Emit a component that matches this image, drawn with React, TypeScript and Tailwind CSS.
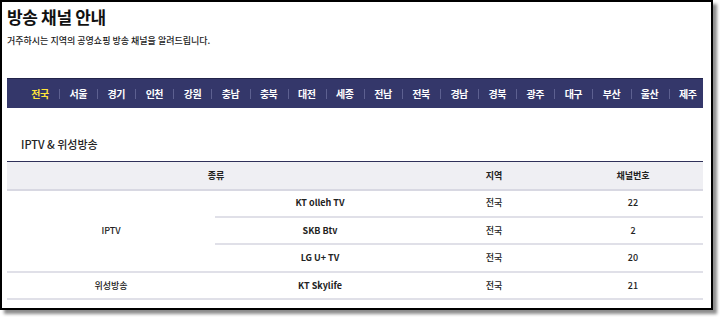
import React from 'react';

const regions = ['전국', '서울', '경기', '인천', '강원', '충남', '충북', '대전', '세종', '전남', '전북', '경남', '경북', '광주', '대구', '부산', '울산', '제주'];

const rows = [
    { name: 'KT olleh TV', area: '전국', ch: '22' },
    { name: 'SKB Btv', area: '전국', ch: '2' },
    { name: 'LG U+ TV', area: '전국', ch: '20' },
];

const cell = 'h-[27.4px] border-b-2 border-[#e0e0e8] text-center align-middle';

const App: React.FC = () => {
    return (
        <div className="w-[720px] h-[317px] bg-white" style={{ fontFamily: '"Noto Sans CJK KR", "Noto Sans", sans-serif' }}>
            <div className="w-[713px] h-[310px] border-2 border-black bg-white shadow-[4px_4px_3px_rgba(0,0,0,0.45)] text-[#1e1e1e]">
                <div className="ml-[5px] w-[696px] flex flex-col">
                    <h1 className="mt-[3px] text-[17px] leading-[24px] font-bold tracking-[-0.02em] text-[#111]">방송 채널 안내</h1>
                    <p className="mt-[5px] text-[9px] leading-[14px] font-medium text-[#1a1a1a]">거주하시는 지역의 공영쇼핑 방송 채널을 알려드립니다.</p>

                    <nav className="mt-[30px] h-[30px] flex items-center pl-[14px] bg-[#34376a] border-t border-[#22244a] overflow-hidden">
                        {regions.map((r, i) => (
                            <span
                                key={r}
                                className={`relative shrink-0 w-[38.1px] text-center text-[10px] font-bold tracking-[-0.05em] ${i === 0 ? 'text-[#ffe53a]' : 'text-white'} ${i > 0 ? "before:content-[''] before:absolute before:left-0 before:top-[3px] before:h-[10px] before:w-px before:bg-[#5d6090]" : ''}`}
                            >
                                {r}
                            </span>
                        ))}
                    </nav>

                    <h2 className="mt-[28px] pl-[14px] text-[11px] leading-[16px] font-medium text-[#222]">IPTV &amp; 위성방송</h2>

                    <table className="mt-[9px] w-[696px] table-fixed border-collapse text-[9px] text-[#222]">
                        <colgroup>
                            <col className="w-[208px]" />
                            <col className="w-[210px]" />
                            <col className="w-[138px]" />
                            <col className="w-[140px]" />
                        </colgroup>
                        <thead>
                            <tr className="bg-[#efeff3] border-t border-[#2f3159]">
                                <th colSpan={2} className="h-[28px] border-b-2 border-[#d8d8e2] font-bold">종류</th>
                                <th className="h-[28px] border-b-2 border-[#d8d8e2] font-bold">지역</th>
                                <th className="h-[28px] border-b-2 border-[#d8d8e2] font-bold">채널번호</th>
                            </tr>
                        </thead>
                        <tbody>
                            {rows.map((row, i) => (
                                <tr key={row.name}>
                                    {i === 0 && (
                                        <td rowSpan={3} className={`${cell} font-medium`}>IPTV</td>
                                    )}
                                    <td className={`${cell} font-bold`}>{row.name}</td>
                                    <td className={`${cell} font-medium`}>{row.area}</td>
                                    <td className={`${cell} font-medium`}>{row.ch}</td>
                                </tr>
                            ))}
                            <tr>
                                <td className={`${cell} font-medium`}>위성방송</td>
                                <td className={`${cell} font-bold`}>KT Skylife</td>
                                <td className={`${cell} font-medium`}>전국</td>
                                <td className={`${cell} font-medium`}>21</td>
                            </tr>
                        </tbody>
                    </table>
                </div>
            </div>
        </div>
    );
};

export default App;
